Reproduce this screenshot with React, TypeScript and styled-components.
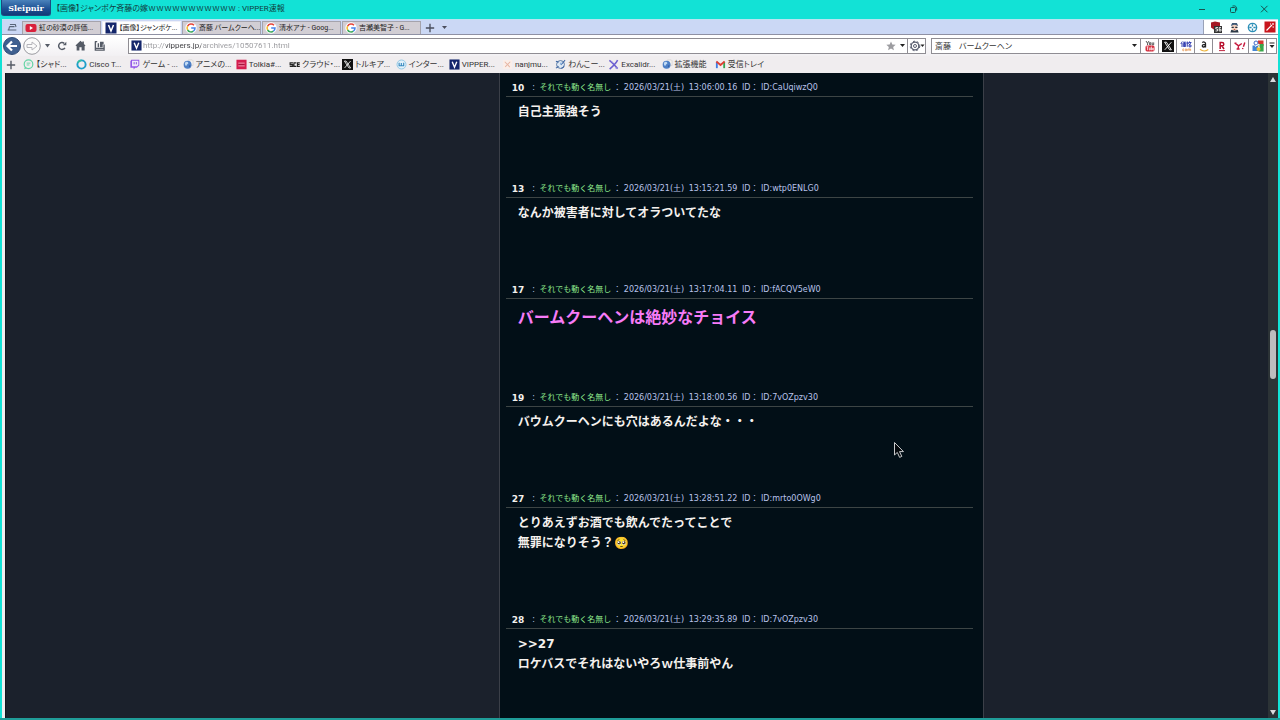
import React from "react";
import styled, { createGlobalStyle } from "styled-components";

const uiFont = `Roboto, "Noto Sans CJK JP", sans-serif`;

const GlobalStyle = createGlobalStyle`
  * { box-sizing: border-box; }
  body { margin: 0; background: #12e2d6; }
  button, input { font-family: ${uiFont}; font-feature-settings: "palt"; margin: 0; }
  button { padding: 0; border: 0; background: none; color: inherit; }
`;

const Window = styled.div`
  height: 100vh;
  display: flex;
  flex-direction: column;
  overflow: hidden;
  font: 8px/12px ${uiFont};
  font-feature-settings: "palt";
  color: #333;
  background: #12e2d6;
  border-bottom: 2px solid #1f9c98;
`;

const TitleBar = styled.header`
  flex: none;
  height: 19px;
  display: flex;
  align-items: flex-start;
  padding-left: 1px;
`;

const Brand = styled.button`
  width: 50px;
  height: 16px;
  border-radius: 0 0 3px 3px;
  background: linear-gradient(#4a82bb, #1c4f92 60%, #123a78);
  border: 1px solid #1d4a80;
  border-top: 0;
  color: #fff;
  font: bold 8px/14px "DejaVu Serif", serif;
`;

const Title = styled.h1`
  flex: 1;
  margin: 0;
  padding-left: 5px;
  font-size: 8px;
  line-height: 18px;
  font-weight: 400;
  color: #10403f;
  white-space: nowrap;
`;

const Controls = styled.div`
  display: flex;
  gap: 22px;
  padding: 5px 11px 0 0;
`;

const ControlButton = styled.button`
  width: 9px;
  height: 8px;
  color: #175451;
  & svg { display: block; }
`;

const Frame = styled.div`
  flex: 1;
  min-height: 0;
  display: flex;
  flex-direction: column;
  margin: 0 2px;
  background: #f0edef;
`;

const TabStrip = styled.nav`
  flex: none;
  height: 16px;
  display: flex;
  align-items: flex-end;
  background: #cbd8f5;
  border-top: 1px solid #b9e4f2;
  border-bottom: 1px solid #8f91a4;
`;

const TabMenu = styled.button`
  width: 20px;
  height: 14px;
  display: grid;
  place-items: center;
`;

const Tab = styled.button<{ $active?: boolean }>`
  width: 79px;
  height: 13px;
  margin-right: 1px;
  padding: 0 2px;
  display: flex;
  align-items: center;
  gap: 2px;
  white-space: nowrap;
  font-size: 7px;
  line-height: 12px;
  color: #222;
  background: ${(p) => (p.$active ? "#fff" : "#d2ced4")};
  border: 1px solid ${(p) => (p.$active ? "#eef0f8" : "#a5a3ac")};
  border-bottom: 0;
`;

const StripButton = styled.button`
  width: 15px;
  height: 13px;
  display: grid;
  place-items: center;
  color: #4a4e5c;
`;

const Extensions = styled.div`
  align-self: stretch;
  margin-left: auto;
  display: flex;
  align-items: center;
  gap: 6px;
  padding: 0 2px 0 6px;
  background: #fff;
  border-left: 1px solid #9aa2b8;
`;

const Row = styled.div`
  flex: none;
  display: flex;
  align-items: center;
`;

const NavBar = styled(Row)`
  height: 21px;
  padding: 0 1px;
  background: linear-gradient(#fff 0 2px, #f2f0f3);
`;

const NavButtons = styled(Row)`
  width: 125px;
  gap: 2px;
`;

const IconButton = styled.button<{ $w?: number }>`
  width: ${(p) => p.$w ?? 16}px;
  height: 18px;
  display: grid;
  place-items: center;
  color: #555b66;
`;

const Field = styled.div`
  height: 16px;
  display: flex;
  align-items: center;
  background: #fff;
  border: 1px solid #8f8d93;
`;

const AddressField = styled(Field)`
  flex: 1;
  padding-left: 2px;
  margin-right: 5px;
`;

const AddressInput = styled.input`
  flex: 1;
  min-width: 0;
  height: 14px;
  padding: 0;
  margin-left: 1px;
  border: 0;
  outline: 0;
  font-size: 8px;
  color: transparent;
  background: linear-gradient(90deg, #98989c 0 23px, #3a3a3e 23px 58px, #98989c 58px);
  -webkit-background-clip: text;
  background-clip: text;
`;

const FieldButton = styled.button<{ $w: number; $line?: boolean }>`
  width: ${(p) => p.$w}px;
  height: 14px;
  display: grid;
  place-items: center;
  color: #222;
  border-left: ${(p) => (p.$line ? "1px solid #8f8d93" : "0")};
`;

const SearchField = styled(Field)`
  width: 346px;
`;

const SearchInput = styled.input`
  flex: 1;
  min-width: 0;
  height: 14px;
  padding: 0 3px;
  border: 0;
  outline: 0;
  background: transparent;
  font-size: 8px;
  color: #333;
`;

const BookmarkBar = styled(Row)`
  height: 17px;
  padding-left: 2px;
`;

const BookmarkList = styled.ul`
  width: 745px;
  margin: 0 0 0 6px;
  padding: 0;
  list-style: none;
  display: grid;
  grid-template-columns: repeat(14, 1fr);
`;

const Bookmark = styled.a`
  display: flex;
  align-items: center;
  gap: 2px;
  width: 52px;
  color: #333;
  text-decoration: none;
  white-space: nowrap;
`;

const Viewport = styled.div`
  flex: 1;
  min-height: 0;
  display: flex;
  padding-left: 3px;
`;

const Page = styled.main`
  flex: 1;
  min-width: 0;
  display: grid;
  grid-template-columns: 26fr 485px 15fr;
  overflow: hidden;
  background: #1b212c;
  border-left: 1px solid #10151c;
`;

const Thread = styled.div`
  grid-column: 2;
  padding: 7px 10px 0 6px;
  overflow: hidden;
  background: #020f17;
  border: solid #3b3f48;
  border-width: 0 1px;
  font-family: "DejaVu Sans", "Noto Sans CJK JP", sans-serif;
  font-feature-settings: normal;
`;

const Post = styled.article`
  padding-bottom: 59px;
`;

const PostHeader = styled.header`
  height: 17px;
  padding-left: 6px;
  border-bottom: 1px solid #3d4545;
  display: flex;
  align-items: center;
  gap: 2px;
  font-size: 8px;
  line-height: 16px;
  color: #b9c3ea;
  white-space: pre;
`;

const PostNumber = styled.b`
  width: 16px;
  font-size: 9px;
  color: #f4f2ee;
`;

const PosterName = styled.span`
  color: #8ee88c;
`;

const PostBody = styled.p<{ $big?: boolean }>`
  margin: 0;
  padding: 5px 0 0 12px;
  font-size: ${(p) => (p.$big ? 16 : 12)}px;
  line-height: ${(p) => (p.$big ? 27 : 20)}px;
  font-weight: 700;
  color: ${(p) => (p.$big ? "#f77bf7" : "#f5f1ee")};
  white-space: pre-line;
`;

const ScrollBar = styled.div`
  width: 10px;
  display: flex;
  flex-direction: column;
  align-items: center;
  background: #2c3336;
`;

const ScrollButton = styled.button`
  width: 10px;
  height: 12px;
  display: grid;
  place-items: center;
  color: #d8dadc;
`;

const Track = styled.div`
  flex: 1;
  padding-top: 34vh;
`;

const Thumb = styled.div`
  width: 6px;
  height: 49px;
  border-radius: 3px;
  background: #bcbcbe;
`;

const Pointer = styled.svg`
  position: absolute;
  left: 893px;
  top: 441px;
`;

const FixedSvg = styled.svg`
  flex: none;
`;

const Icon = ({ size = 12, children }: { size?: number; children: React.ReactNode }) => (
  <FixedSvg width={size} height={size} viewBox="0 0 12 12" fill="none" aria-hidden="true">
    {children}
  </FixedSvg>
);

const Caret = () => (
  <svg width="5" height="3" viewBox="0 0 5 3" aria-hidden="true"><path d="M0 0h5L2.500 3z" fill="currentColor" /></svg>
);

const YouTube = () => (
  <Icon><rect x="0.5" y="2" width="11" height="8" rx="2" fill="#d9213c" /><path d="M4.8 4v4l3.2-2z" fill="#fff" /></Icon>
);
const VLogo = ({ size = 12 }: { size?: number }) => (
  <Icon size={size}><rect x="0.5" y="0.5" width="11" height="11" fill="#14266b" /><path d="M3.500 3L6 9l2.500-6" stroke="#fff" strokeWidth="1.5" /></Icon>
);
const Google = () => (
  <Icon>
    <circle cx="6" cy="6" r="5.7" fill="#fff" />
    <path d="M9 3.2A4 4 0 0 0 2.6 4.1" stroke="#e5443a" strokeWidth="1.5" />
    <path d="M2.6 4.1a4 4 0 0 0 0 3.9" stroke="#f4b928" strokeWidth="1.5" />
    <path d="M2.6 8A4 4 0 0 0 8.4 9.2" stroke="#38a757" strokeWidth="1.5" />
    <path d="M8.4 9.2A4 4 0 0 0 10 6H6.2" stroke="#4484ee" strokeWidth="1.5" />
  </Icon>
);
const XLogo = ({ size = 12 }: { size?: number }) => (
  <Icon size={size}><rect width="12" height="12" fill="#111" /><path d="M2.6 2.2h1.8l5 7.6H7.6z" stroke="#fff" strokeWidth="0.9" /><path d="M9.4 2.2L2.8 9.8" stroke="#fff" strokeWidth="0.9" /></Icon>
);
const Globe = () => (
  <Icon size={11}>
    <path d="M6 1h4l1 1v5H9z" fill="#f4f2f0" stroke="#c9c6c4" strokeWidth="0.6" />
    <circle cx="5" cy="6.3" r="4.3" fill="#4d7fc6" />
    <path d="M2 4.5c1-1.8 3.200-1.900 3.800-.4S4.200 5.500 4 6.800 2 7 2 4.500z" fill="#c2dbf5" />
    <path d="M6.200 7.4l2-.7-1.200 2.4z" fill="#2b529b" />
  </Icon>
);

const bookmarks: { label: string; icon: React.ReactNode }[] = [
  { label: "【シャド...", icon: <Icon size={11}><circle cx="6" cy="5.7" r="4.700" stroke="#63d4a4" strokeWidth="1.3" /><path d="M1.3 11.2l.8-3L4.5 10z" fill="#63d4a4" /><path d="M4 4.500h4M4 6.500h3" stroke="#63d4a4" /></Icon> },
  { label: "Cisco T...", icon: <Icon size={11}><circle cx="6" cy="6" r="4.5" stroke="#1f9fc9" strokeWidth="2.1" /><path d="M2 4a4.500 4.500 0 0 1 4-2.500" stroke="#35c2a0" strokeWidth="2" /></Icon> },
  { label: "ゲーム - ...", icon: <Icon size={11}><path d="M2.5.8h8.7v6.4L8.6 9.6H6.8L5 11.4V9.6H1.5V2.4z" fill="#9355e8" /><path d="M3.3 1.9h6.9v4.6L8.7 8H3.3z" fill="#efe8fb" /><path d="M5.6 3.4v2.4M8 3.4v2.4" stroke="#7e43d4" /></Icon> },
  { label: "アニメの...", icon: <Globe /> },
  { label: "Tolkia#...", icon: <Icon size={11}><rect x="0.5" y="0.8" width="11" height="10.4" fill="#d51d50" /><path d="M2.500 4.500h7M2.500 7.500h7" stroke="#f7c6d5" strokeWidth="0.8" /><path d="M3 6h6" stroke="#8e1235" strokeWidth="0.8" /></Icon> },
  { label: "クラウド・...", icon: <Icon size={11}><path d="M4.3 4.2H1.2v1.9h2.9V8H.8M8 4.2H5.4V8H8M11.8 4.2H9.2V8h2.6M9.2 6h2.4" stroke="#222" strokeWidth="1.2" /></Icon> },
  { label: "トルキア...", icon: <XLogo size={11} /> },
  { label: "インター...", icon: <Icon size={11}><circle cx="6" cy="6" r="4.9" fill="#e2f1fa" stroke="#8cc4e2" /><path d="M3.4 4v3.4h2.4V4.4v3h2.6V4" stroke="#3688be" strokeWidth="1.2" /></Icon> },
  { label: "VIPPER...", icon: <VLogo size={11} /> },
  { label: "nanjmu...", icon: <Icon size={11}><rect x="1" y="1" width="10" height="10" fill="#faeee9" /><path d="M3 3l3 3 3-3M3.5 8.5L6 6l2.5 2.8" stroke="#e7b5a2" strokeWidth="1.1" /></Icon> },
  { label: "わんこー...", icon: <Icon size={11}><circle cx="6" cy="6" r="4.3" fill="#dfe9f4" stroke="#50719d" /><path d="M1 2.5l3 1M11 1.2L6.4 6.5M1 10l3-2M7 10.4l3-2.4" stroke="#3d65a5" strokeWidth="1.1" /><circle cx="6.5" cy="5" r="1.2" fill="#8db4dd" /></Icon> },
  { label: "Excalidr...", icon: <Icon size={11}><path d="M1.5 1.5c3 2 6 5.5 9 9M10.5 1.2C8.5 5 5 8.2 1.8 11" stroke="#6b5fd0" strokeWidth="1.7" /><path d="M3.5 2l2 2.2M8 10l2.2-.4" stroke="#9a92e6" /></Icon> },
  { label: "拡張機能", icon: <Globe /> },
  { label: "受信トレイ", icon: <Icon size={11}><path d="M2 10V3" stroke="#3e7de6" strokeWidth="2" /><path d="M10 10V3" stroke="#35a350" strokeWidth="2" /><path d="M1.5 2.8L6 6.5l4.5-3.7" stroke="#df4034" strokeWidth="2" /></Icon> },
];

const tabs = [
  { label: "紅の砂漠の評価...", icon: <YouTube /> },
  { label: "【画像】ジャンポケ...", icon: <VLogo />, active: true },
  { label: "斎藤 バームクーヘ...", icon: <Google /> },
  { label: "清水アナ - Goog...", icon: <Google /> },
  { label: "吉瀬美智子 - G...", icon: <Google /> },
];

const engines = [
  { name: "YouTube", icon: <Icon><path d="M2 1l1.5 2.3V5M5 1L3.5 3.3M5.4 2.7h1.4v2H5.4zM8.2 2.4v2.4h1.5V2.4" stroke="#333" strokeWidth="0.8" /><rect x="1.500" y="5.4" width="9" height="6" rx="1.6" fill="#d42c3c" /><path d="M2.500 6.8h2M3.500 6.8v3.4M5.300 7.5v2.5h1V7.5M7.4 6.5V10h.8V8h-.8M10 8.2h-.9V10h1" stroke="#fff" strokeWidth="0.7" /></Icon> },
  { name: "X", icon: <XLogo /> },
  { name: "価格.com", icon: <Icon><path d="M2.3 1.5L.8 4M2 3v4M3 2.2h3M3.4 3.5h2.2v3H3.4zM4.5 2.2v4M7.3 1.5v5.3M6.3 3h2M9.6 1.4L8.4 3.8M8.8 2.5h2.4L9 5M9 5h2v1.8H9z" stroke="#2936ad" strokeWidth="0.9" /><path d="M4 9H2.8v1.7H4M5.2 9h1.4v1.7H5.2zM7.8 10.9V9h2.8v1.9M9.2 9v1.9" stroke="#e18b42" strokeWidth="0.7" /></Icon> },
  { name: "Amazon", icon: <Icon><path d="M4.300 2.6c1-1 3.2-.9 3.2 1v4M7.4 4.3C5.4 4.2 4.200 5 4.300 6.1c.2 1.4 2.5 1.1 3.100-.4" stroke="#222" strokeWidth="1.3" /><path d="M2 9.300c2.500 2 5.900 1.900 8.300 .2" stroke="#ebb139" strokeWidth="1.1" /></Icon> },
  { name: "Rakuten", icon: <Icon><path d="M4.200 9V2.6h1.800c2.4 0 2.4 3.2 0 3.2H4.200M6 6l2 3" stroke="#b8102e" strokeWidth="1.5" /><path d="M3 10.6h6" stroke="#b8102e" strokeWidth="0.9" /></Icon> },
  { name: "Yahoo!", icon: <Icon><path d="M1 3.100l3.6 2.700L7.800 3.500M4.6 5.8L4 8.900M2.6 9h3M.5 3.200h2" stroke="#c5173c" strokeWidth="1.4" /><path d="M10.8 2.500L9.400 6.800M8.9 8l-.3 1.2" stroke="#c5173c" strokeWidth="1.4" /></Icon> },
  { name: "Google", icon: <Icon><rect x="6" y="0.5" width="5.5" height="5.5" fill="#d8362f" /><rect x="6.6" y="4" width="5" height="7.5" fill="#36a64a" /><rect x="0.5" y="5.5" width="5.5" height="5.5" fill="#4385d4" /><circle cx="4" cy="3" r="2" stroke="#4067c2" /><circle cx="6.5" cy="9" r="2" fill="#f0c235" /><path d="M3 6.500l4-2.500v4" stroke="#fff" /></Icon> },
];

const posts: { no: number; time: string; id: string; text: string; big?: boolean }[] = [
  { no: 10, time: "13:06:00.16", id: "CaUqiwzQ0", text: "自己主張強そう" },
  { no: 13, time: "13:15:21.59", id: "wtp0ENLG0", text: "なんか被害者に対してオラついてたな" },
  { no: 17, time: "13:17:04.11", id: "fACQV5eW0", text: "バームクーヘンは絶妙なチョイス", big: true },
  { no: 19, time: "13:18:00.56", id: "7vOZpzv30", text: "バウムクーヘンにも穴はあるんだよな・・・" },
  { no: 27, time: "13:28:51.22", id: "mrto0OWg0", text: "とりあえずお酒でも飲んでたってことで\n無罪になりそう？🥺" },
  { no: 28, time: "13:29:35.89", id: "7vOZpzv30", text: ">>27\nロケバスでそれはないやろｗ仕事前やん" },
];

export default function App() {
  return (
    <Window>
      <GlobalStyle />
      <TitleBar>
        <Brand>Sleipnir</Brand>
        <Title>【画像】ジャンポケ斉藤の嫁ｗｗｗｗｗｗｗｗｗｗｗ : VIPPER速報</Title>
        <Controls>
          <ControlButton aria-label="Minimize"><svg width="9" height="8"><path d="M1 4.5h6" stroke="currentColor" /></svg></ControlButton>
          <ControlButton aria-label="Restore"><svg width="9" height="8" fill="none"><rect x="1.5" y="2.5" width="5" height="5" rx="1" stroke="currentColor" /><path d="M3.5 1C6.5.5 8 1.300 7.700 5.500" stroke="currentColor" /></svg></ControlButton>
          <ControlButton aria-label="Close"><svg width="9" height="8"><path d="M1 .8l6.500 6.500M7.500.8L1 7.300" stroke="currentColor" /></svg></ControlButton>
        </Controls>
      </TitleBar>
      <Frame>
        <TabStrip>
          <TabMenu aria-label="Tab list"><Icon size={10}><path d="M3.500 3h6.500l.8 3M3 5.500h6M.8 9.500h10.400M3 5.500l-1 4" stroke="#596579" strokeWidth="1.300" /></Icon></TabMenu>
          {tabs.map((t) => (
            <Tab key={t.label} $active={t.active}>{t.icon}<span>{t.label}</span></Tab>
          ))}
          <StripButton aria-label="New tab"><Icon size={10}><path d="M6 1v10M1 6h10" stroke="currentColor" strokeWidth="1.600" /></Icon></StripButton>
          <StripButton aria-label="Tab options"><svg width="5" height="3"><path d="M0 0h5L2.500 3z" fill="currentColor" /></svg></StripButton>
          <Extensions>
            <IconButton $w={12} aria-label="Ad blocker"><Icon><path d="M1 1.500L5 .5l5 1v5L6 10 1 6.500z" fill="#a51824" /><rect x="4" y="5" width="8" height="7" fill="#333" /><path d="M8 6.500H5.800V8H7.500v2H5.500M11 6.500H9.200V10H11V8.300H9.200" stroke="#fff" strokeWidth="0.800" /></Icon></IconButton>
            <IconButton $w={12} aria-label="Assistant"><Icon size={11}><path d="M2 4L3.500 1h5L10 4z" fill="#3f5a78" /><circle cx="6" cy="6.300" r="3.200" fill="#f1d0bd" /><path d="M1.500 11.500L2.500 8.500 6 9.500l3.500-1L10.500 11.500z" fill="#2c3846" /><path d="M2.800 5.800h2.400M6.800 5.800h2.400" stroke="#24303e" strokeWidth="1.500" /><path d="M5.300 8.300h1.400" stroke="#c0392b" /></Icon></IconButton>
            <IconButton $w={12} aria-label="Target"><Icon size={11}><circle cx="6" cy="6" r="4.500" stroke="#2c8fb7" strokeWidth="1.500" /><path d="M6 2.500v2.500M6 7v2.500M2.500 6h2.500M7 6h2.500" stroke="#2c8fb7" strokeWidth="1.400" /></Icon></IconButton>
            <IconButton $w={12} aria-label="Magic wand"><Icon><rect x="0.500" y="0.500" width="11" height="11" fill="#c8161d" /><path d="M2.500 9.500L8 4M6 3h1M9 2v2M8.500 6h1.500" stroke="#fff" strokeWidth="1.200" /></Icon></IconButton>
          </Extensions>
        </TabStrip>

        <NavBar>
          <NavButtons>
            <IconButton $w={18} aria-label="Back"><svg width="18" height="18"><circle cx="9" cy="9" r="8.500" fill="#3f6090" stroke="#314d78" /><path d="M14 9H5M9 4.500L4.500 9 9 13.500" fill="none" stroke="#fff" strokeWidth="2.200" /></svg></IconButton>
            <IconButton $w={18} aria-label="Forward"><svg width="18" height="18" fill="none"><circle cx="9" cy="9" r="8.300" fill="#fafafa" stroke="#9a9aa0" /><path d="M4 7.500h5V5l5 4-5 4v-2.500H4z" stroke="#b4b4ba" /></svg></IconButton>
            <IconButton $w={9} aria-label="History"><svg width="5" height="4"><path d="M0 0h5L2.500 3.500z" fill="currentColor" /></svg></IconButton>
            <IconButton aria-label="Reload"><Icon size={10}><path d="M9.500 8.200A4.100 4.100 0 1 1 8.700 2.800" stroke="currentColor" strokeWidth="1.800" /><path d="M7 5.200h4.200V.9z" fill="currentColor" /></Icon></IconButton>
            <IconButton aria-label="Home"><Icon size={11}><path d="M.5 6L6 .8l2 1.900V1.500h1.700v2.800L11.500 6l-1 .9V11.500H7.200V8H4.800v3.500H1.800V6.800z" fill="currentColor" /></Icon></IconButton>
            <IconButton $w={18} aria-label="Save page"><Icon size={11}><path d="M1.500 1.500v9.500h9.500V5M1 1.800h2.500M1.500 9.200h9" stroke="currentColor" strokeWidth="1.500" /><path d="M4 3.500h1.500v4.500H4zM6.500 2h4v2.500h-1v3.500H6.500z" fill="currentColor" /></Icon></IconButton>
          </NavButtons>
          <AddressField>
            <VLogo size={11} />
            <AddressInput aria-label="Address" defaultValue="http://vippers.jp/archives/10507611.html" />
            <FieldButton $w={12} aria-label="Add bookmark"><Icon size={10}><path d="M6 .5l1.600 3.700 4 .3-3 2.700.9 4L6 9.100l-3.500 2.100.9-4-3-2.700 4-.3z" fill="#9c9ca0" /></Icon></FieldButton>
            <FieldButton $w={10} aria-label="Address history"><Caret /></FieldButton>
            <FieldButton $w={18} $line aria-label="Engine settings">
              <svg width="16" height="12" fill="none"><circle cx="6" cy="6" r="3.800" stroke="#5b6072" strokeWidth="1.300" /><circle cx="6" cy="6" r="4.800" stroke="#5b6072" strokeDasharray="2 2" /><circle cx="6" cy="6" r="1.500" stroke="#5b6072" /><path d="M11.500 4.500h4L13.500 7z" fill="#222" /></svg>
            </FieldButton>
          </AddressField>
          <SearchField>
            <SearchInput aria-label="Search" defaultValue="斎藤　バームクーヘン" />
            <FieldButton $w={12} aria-label="Search history"><Caret /></FieldButton>
            {engines.map((e) => (
              <FieldButton key={e.name} $w={18} $line aria-label={e.name}>{e.icon}</FieldButton>
            ))}
            <FieldButton $w={10} $line aria-label="More engines"><svg width="6" height="7"><path d="M.5 1h5" stroke="currentColor" /><path d="M.5 3h5L3 6z" fill="currentColor" /></svg></FieldButton>
          </SearchField>
        </NavBar>

        <BookmarkBar>
          <IconButton $w={13} aria-label="Add to bookmarks"><Icon size={10}><path d="M6 1v10M1 6h10" stroke="currentColor" strokeWidth="1.700" /></Icon></IconButton>
          <BookmarkList>
            {bookmarks.map((b) => (
              <li key={b.label}><Bookmark href="#">{b.icon}<span>{b.label}</span></Bookmark></li>
            ))}
          </BookmarkList>
        </BookmarkBar>

        <Viewport>
          <Page>
            <Thread>
              {posts.map((p) => (
                <Post key={p.no}>
                  <PostHeader>
                    <PostNumber>{p.no}</PostNumber>
                    <span> : </span>
                    <PosterName>それでも動く名無し</PosterName>
                    <span>{"： 2026/03/21(土) "}</span>
                    <span>{`${p.time} `}</span>
                    <span>{`ID： ID:${p.id}`}</span>
                  </PostHeader>
                  <PostBody $big={p.big}>{p.text}</PostBody>
                </Post>
              ))}
            </Thread>
          </Page>
          <ScrollBar>
            <ScrollButton aria-label="Scroll up"><svg width="6" height="5"><path d="M0 5L3 0l3 5z" fill="currentColor" /></svg></ScrollButton>
            <Track><Thumb /></Track>
            <ScrollButton aria-label="Scroll down"><svg width="6" height="5"><path d="M0 0h6L3 5z" fill="currentColor" /></svg></ScrollButton>
          </ScrollBar>
        </Viewport>
      </Frame>
      <Pointer width="12" height="19" viewBox="0 0 12 19" aria-hidden="true">
        <path d="M1.500 1.500v12.500l2.800-2.600 2.300 5 2.200-1-2.300-4.800h4z" fill="#05090d" stroke="#c9cbcd" strokeWidth="1" />
      </Pointer>
    </Window>
  );
}
